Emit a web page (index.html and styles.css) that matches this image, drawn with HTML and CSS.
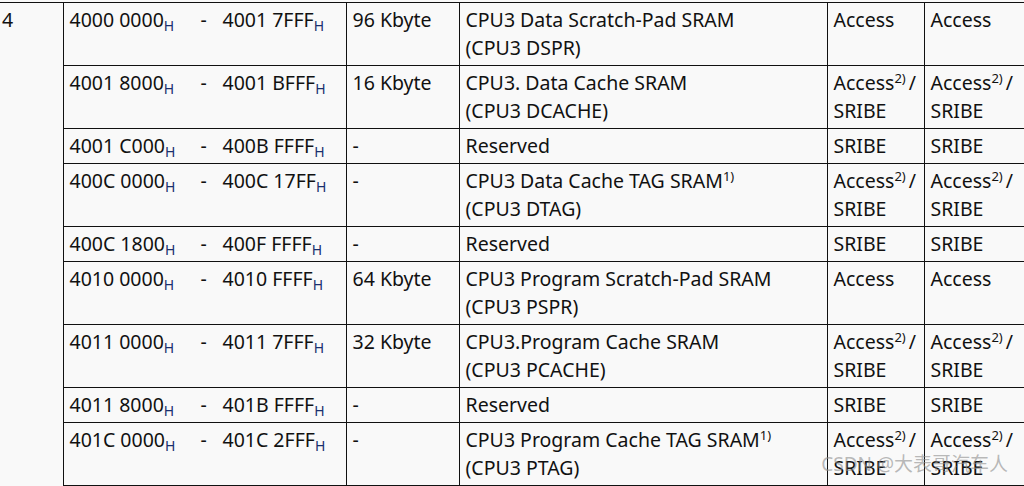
FILE: index.html
```html
<!DOCTYPE html>
<html>
<head>
<meta charset="utf-8">
<link rel="stylesheet" href="styles.css">
</head>
<body>
<div class="page">
<table class="map">
  <colgroup>
    <col class="c1"><col class="c2"><col class="c3"><col class="c4"><col class="c5"><col class="c6">
  </colgroup>
  <tbody>
    <tr>
      <td class="seg" rowspan="9">4</td>
      <td><div class="range"><span class="from">4000 0000<sub>H</sub></span><span class="dash">-</span><span class="to">4001 7FFF<sub>H</sub></span></div></td>
      <td>96 Kbyte</td>
      <td>CPU3 Data Scratch-Pad SRAM<br>(CPU3 DSPR)</td>
      <td>Access</td>
      <td>Access</td>
    </tr>
    <tr>
      <td><div class="range"><span class="from">4001 8000<sub>H</sub></span><span class="dash">-</span><span class="to">4001 BFFF<sub>H</sub></span></div></td>
      <td>16 Kbyte</td>
      <td>CPU3. Data Cache SRAM<br>(CPU3 DCACHE)</td>
      <td>Access<sup>2)</sup><span class="sl">/</span><br>SRIBE</td>
      <td>Access<sup>2)</sup><span class="sl">/</span><br>SRIBE</td>
    </tr>
    <tr>
      <td><div class="range"><span class="from">4001 C000<sub>H</sub></span><span class="dash">-</span><span class="to">400B FFFF<sub>H</sub></span></div></td>
      <td>-</td>
      <td>Reserved</td>
      <td>SRIBE</td>
      <td>SRIBE</td>
    </tr>
    <tr>
      <td><div class="range"><span class="from">400C 0000<sub>H</sub></span><span class="dash">-</span><span class="to">400C 17FF<sub>H</sub></span></div></td>
      <td>-</td>
      <td>CPU3 Data Cache TAG SRAM<sup>1)</sup><br>(CPU3 DTAG)</td>
      <td>Access<sup>2)</sup><span class="sl">/</span><br>SRIBE</td>
      <td>Access<sup>2)</sup><span class="sl">/</span><br>SRIBE</td>
    </tr>
    <tr>
      <td><div class="range"><span class="from">400C 1800<sub>H</sub></span><span class="dash">-</span><span class="to">400F FFFF<sub>H</sub></span></div></td>
      <td>-</td>
      <td>Reserved</td>
      <td>SRIBE</td>
      <td>SRIBE</td>
    </tr>
    <tr>
      <td><div class="range"><span class="from">4010 0000<sub>H</sub></span><span class="dash">-</span><span class="to">4010 FFFF<sub>H</sub></span></div></td>
      <td>64 Kbyte</td>
      <td>CPU3 Program Scratch-Pad SRAM<br>(CPU3 PSPR)</td>
      <td>Access</td>
      <td>Access</td>
    </tr>
    <tr>
      <td><div class="range"><span class="from">4011 0000<sub>H</sub></span><span class="dash">-</span><span class="to">4011 7FFF<sub>H</sub></span></div></td>
      <td>32 Kbyte</td>
      <td>CPU3.Program Cache SRAM<br>(CPU3 PCACHE)</td>
      <td>Access<sup>2)</sup><span class="sl">/</span><br>SRIBE</td>
      <td>Access<sup>2)</sup><span class="sl">/</span><br>SRIBE</td>
    </tr>
    <tr>
      <td><div class="range"><span class="from">4011 8000<sub>H</sub></span><span class="dash">-</span><span class="to">401B FFFF<sub>H</sub></span></div></td>
      <td>-</td>
      <td>Reserved</td>
      <td>SRIBE</td>
      <td>SRIBE</td>
    </tr>
    <tr>
      <td><div class="range"><span class="from">401C 0000<sub>H</sub></span><span class="dash">-</span><span class="to">401C 2FFF<sub>H</sub></span></div></td>
      <td>-</td>
      <td>CPU3 Program Cache TAG SRAM<sup>1)</sup><br>(CPU3 PTAG)</td>
      <td>Access<sup>2)</sup><span class="sl">/</span><br>SRIBE</td>
      <td>Access<sup>2)</sup><span class="sl">/</span><br>SRIBE</td>
    </tr>
  </tbody>
</table>
<div class="watermark">CSDN @大表哥汽车人</div>
</div>
</body>
</html>
```

FILE: styles.css
```css
html, body {
  margin: 0;
  padding: 0;
  background: #f9f9f9;
  overflow: hidden;
}
.page {
  position: relative;
  width: 1024px;
  height: 486px;
  padding-top: 2px;
  box-sizing: border-box;
  overflow: hidden;
}
.map {
  border-collapse: collapse;
  table-layout: fixed;
  width: 1100px;
  font-family: "Noto Sans", "Open Sans", sans-serif;
  font-size: 19.5px;
  line-height: 28px;
  color: #111;
}
.c1 { width: 63px; }
.c2 { width: 283px; }
.c3 { width: 113px; }
.c4 { width: 368px; }
.c5 { width: 97px; }
.c6 { width: 176px; }
.map td {
  border: 1px solid #111;
  padding: 3px 6px 3px 6px;
  vertical-align: top;
  white-space: nowrap;
}
.map td.seg {
  border-left: none;
  border-bottom: none;
  padding-left: 2px;
}
.range {
  display: flex;
}
.from { width: 131px; }
.dash { width: 22px; }
sub {
  font-size: 14px;
  line-height: 0;
  vertical-align: -4px;
  color: #1a2f6e;
}
sup {
  font-size: 13px;
  line-height: 0;
  vertical-align: 7px;
}
.sl {
  margin-left: 3px;
}
.watermark {
  position: absolute;
  right: 16px;
  bottom: 9px;
  font-family: "Noto Sans", "Noto Sans CJK SC", sans-serif;
  font-size: 19px;
  color: rgba(140, 140, 140, 0.6);
  white-space: nowrap;
}
```
